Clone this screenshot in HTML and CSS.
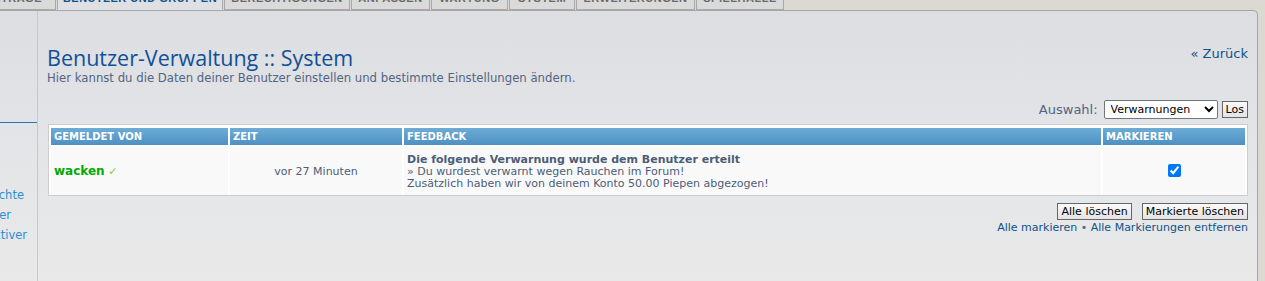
FILE: index.html
```html
<!DOCTYPE html>
<html lang="de">
<head>
    <meta charset="UTF-8">
    <title>Benutzer-Verwaltung :: System</title>
    <link rel="stylesheet" href="styles.css">
</head>
<body>
    <div class="tabs">
        <div class="tab t-beitraege"><span>Beiträge</span></div>
        <div class="tab active t-benutzer"><span>Benutzer und Gruppen</span></div>
        <div class="tab t-rechte"><span>Berechtigungen</span></div>
        <div class="tab t-anpassen"><span>Anpassen</span></div>
        <div class="tab t-wartung"><span>Wartung</span></div>
        <div class="tab t-system"><span>System</span></div>
        <div class="tab t-erw"><span>Erweiterungen</span></div>
        <div class="tab t-spiel"><span>Spielhalle</span></div>
    </div>

    <div class="panel">
        <div class="menu">
            <div class="menu-head"></div>
            <a href="#" class="menu-link m-rechte">Benutzerrechte</a>
            <a href="#" class="menu-link m-user">Benutzer</a>
            <a href="#" class="menu-link m-inaktiv">Inaktiver</a>
        </div>

        <div class="main">
            <div class="title-row">
                <h1>Benutzer-Verwaltung :: System</h1>
                <a href="#" class="back">&laquo; Zurück</a>
            </div>
            <p class="intro">Hier kannst du die Daten deiner Benutzer einstellen und bestimmte Einstellungen ändern.</p>

            <form class="filter">
                <label for="auswahl">Auswahl:</label>
                <select id="auswahl">
                    <option>Verwarnungen</option>
                </select>
                <button type="button" class="btn">Los</button>
            </form>

            <div class="table-box">
                <table class="list">
                    <thead>
                        <tr>
                            <th class="c-user">Gemeldet von</th>
                            <th class="c-time">Zeit</th>
                            <th class="c-feed">Feedback</th>
                            <th class="c-mark">Markieren</th>
                        </tr>
                    </thead>
                    <tbody>
                        <tr>
                            <td class="c-user"><span class="user">wacken</span> <span class="ok">&#10003;</span></td>
                            <td class="c-time center">vor 27 Minuten</td>
                            <td class="c-feed">
                                <strong>Die folgende Verwarnung wurde dem Benutzer erteilt</strong><br>
                                &raquo; Du wurdest verwarnt wegen Rauchen im Forum!<br>
                                Zusätzlich haben wir von deinem Konto 50.00 Piepen abgezogen!
                            </td>
                            <td class="c-mark center"><input type="checkbox" checked></td>
                        </tr>
                    </tbody>
                </table>
            </div>

            <div class="actions">
                <button type="button" class="btn">Alle löschen</button>
                <button type="button" class="btn">Markierte löschen</button>
            </div>
            <div class="mark-links">
                <a href="#">Alle markieren</a> &bull; <a href="#">Alle Markierungen entfernen</a>
            </div>
        </div>
    </div>
</body>
</html>
```

FILE: styles.css
```css
body {
    margin: 0;
    background-color: #dcd9d3;
    font-family: "DejaVu Sans", Verdana, sans-serif;
    font-size: 11px;
    color: #536482;
    overflow: hidden;
}
a {
    color: #105289;
    text-decoration: none;
}

/* Reiter oben */
.tabs {
    display: flex;
    height: 11px;
    overflow: hidden;
    margin-bottom: -1px;
    position: relative;
    z-index: 1;
}
.tab {
    height: 20px;
    margin-top: -10px;
    margin-right: 1px;
    background-color: #dadada;
    border: 1px solid #a9a9a9;
    border-top: none;
    box-sizing: border-box;
    display: flex;
    align-items: flex-end;
    justify-content: center;
    font-family: "Liberation Sans", Arial, sans-serif;
    font-weight: bold;
    font-size: 11px;
    text-transform: uppercase;
    color: #6a6a6a;
    letter-spacing: 0.5px;
}
.tab span {
    margin-bottom: 5px;
}
.tab.active {
    background-color: #dfe0e3;
    border-bottom-color: #dfe0e3;
    color: #105289;
}
.t-beitraege { width: 57px; justify-content: flex-end; padding-right: 13px; margin-left: -1px; }
.t-benutzer { width: 166px; }
.t-rechte { width: 126px; }
.t-anpassen { width: 79px; }
.t-wartung { width: 77px; }
.t-system { width: 66px; }
.t-erw { width: 119px; }
.t-spiel { width: 88px; }

/* Hauptbereich */
.panel {
    display: flex;
    height: 280px;
    margin-right: 7px;
    border: 1px solid #a6a6a6;
    border-left: none;
    border-bottom: none;
    border-top-right-radius: 5px;
    background: linear-gradient(#dcdee2, #e5e6e8 60%, #e9e9e9);
}
.menu {
    width: 37px;
    flex-shrink: 0;
    border-right: 1px solid #c8c8c8;
    overflow: hidden;
    direction: rtl;
}
.menu-head {
    height: 111px;
    border-bottom: 1px solid #2a78b4;
}
.menu-link {
    display: block;
    white-space: nowrap;
    color: #2b8fd3;
    font-size: 11.5px;
    line-height: 20px;
    text-align: right;
}
.m-rechte { margin-top: 62px; padding-right: 13px; }
.m-user { padding-right: 26px; }
.m-inaktiv { padding-right: 10px; }

.main {
    flex: 1;
    padding: 0 9px 0 9px;
}
.title-row {
    display: flex;
    justify-content: space-between;
    align-items: flex-start;
    margin-top: 34px;
}
h1 {
    margin: 0;
    font-family: "Open Sans", sans-serif;
    font-weight: normal;
    font-size: 21.5px;
    line-height: 26px;
    color: #115098;
}
.back {
    font-size: 13px;
    margin-top: 1px;
}
.intro {
    margin: 0;
    font-size: 11.7px;
    line-height: 14px;
}

.filter {
    display: flex;
    justify-content: flex-end;
    align-items: center;
    margin-top: 15px;
    font-size: 13px;
}
.filter label {
    margin-right: 6px;
    color: #536482;
}
.filter select {
    width: 114px;
    height: 19px;
    font-family: "DejaVu Sans", Verdana, sans-serif;
    font-size: 11px;
    border: 1px solid #767676;
    border-radius: 2px;
    background-color: #fff;
    color: #000;
    padding: 0 2px;
}
.btn {
    font-family: "DejaVu Sans", Verdana, sans-serif;
    font-size: 11px;
    line-height: 13px;
    padding: 1px 3px;
    border: 1px solid #666;
    background: linear-gradient(#fafafa, #e4e4e4);
    color: #000;
    margin-left: 4px;
}

/* Tabelle */
.table-box {
    margin-top: 5px;
    margin-left: 1px;
    background-color: #fff;
    border: 1px solid #cdcdcd;
    padding: 3px 2px 0 2px;
}
.list {
    width: 100%;
    border-collapse: collapse;
}
.list th {
    background: linear-gradient(#6dacd6, #4d90c2);
    border-bottom: 1px solid #3b78ad;
    border-left: 2px solid #fff;
    color: #fff;
    font-size: 10px;
    font-weight: bold;
    text-transform: uppercase;
    text-align: left;
    padding: 0 3px;
    height: 17px;
}
.list td {
    background-color: #f9f9f9;
    border-left: 2px solid #fff;
    border-top: 2px solid #fff;
    padding: 4px 3px 3px 3px;
    line-height: 12px;
    height: 41px;
    vertical-align: middle;
    color: #4c5d77;
}
.list th:first-child, .list td:first-child {
    border-left: none;
}
.c-user { width: 171px; }
.c-time { width: 166px; }
.c-mark { width: 136px; }
.center { text-align: center; }
.user {
    color: #00aa00;
    font-weight: bold;
    font-size: 12px;
}
.ok {
    color: #7ccb4a;
    font-size: 11px;
}
.list input {
    margin: 0;
}

.actions {
    display: flex;
    justify-content: flex-end;
    margin-top: 7px;
}
.actions .btn {
    margin-left: 10px;
}
.mark-links {
    text-align: right;
    margin-top: 1px;
    line-height: 13px;
}
```
